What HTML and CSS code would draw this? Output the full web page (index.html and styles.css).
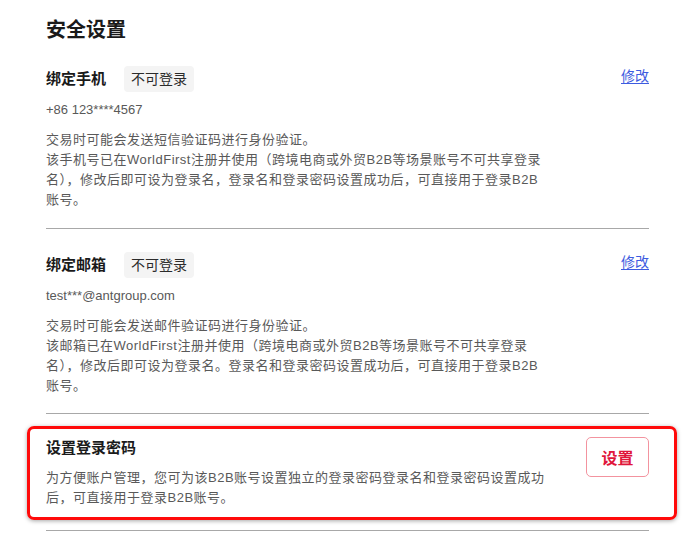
FILE: index.html
```html
<!DOCTYPE html>
<html lang="zh-CN">
<head>
<meta charset="utf-8">
<title>安全设置</title>
<link rel="stylesheet" href="styles.css">
</head>
<body>
<main class="page">
  <h1 class="page-title">安全设置</h1>

  <section class="item">
    <div class="item-head">
      <div class="item-name">
        <h2 class="item-title">绑定手机</h2>
        <span class="tag">不可登录</span>
      </div>
      <a class="link" href="#">修改</a>
    </div>
    <p class="item-value">+86 123****4567</p>
    <p class="item-desc">交易时可能会发送短信验证码进行身份验证。<br>该手机号已在WorldFirst注册并使用（跨境电商或外贸B2B等场景账号不可共享登录<br>名），修改后即可设为登录名，登录名和登录密码设置成功后，可直接用于登录B2B<br>账号。</p>
  </section>

  <section class="item">
    <div class="item-head">
      <div class="item-name">
        <h2 class="item-title">绑定邮箱</h2>
        <span class="tag">不可登录</span>
      </div>
      <a class="link" href="#">修改</a>
    </div>
    <p class="item-value">test***@antgroup.com</p>
    <p class="item-desc">交易时可能会发送邮件验证码进行身份验证。<br>该邮箱已在WorldFirst注册并使用（跨境电商或外贸B2B等场景账号不可共享登录<br>名），修改后即可设为登录名。登录名和登录密码设置成功后，可直接用于登录B2B<br>账号。</p>
  </section>

  <section class="item item-highlight">
    <div class="item-row">
      <div class="item-main">
        <h2 class="item-title">设置登录密码</h2>
        <p class="item-desc item-desc-tight">为方便账户管理，您可为该B2B账号设置独立的登录密码登录名和登录密码设置成功<br>后，可直接用于登录B2B账号。</p>
      </div>
      <button class="btn-outline" type="button">设置</button>
    </div>
  </section>
</main>
</body>
</html>
```

FILE: styles.css
```css
* {
  box-sizing: border-box;
}

html, body {
  margin: 0;
  padding: 0;
  background: #ffffff;
}

body {
  font-family: "Liberation Sans", "Noto Sans CJK SC", sans-serif;
  color: #1f1f1f;
}

.page {
  width: 698px;
  padding: 16px 49px 0 46px;
}

.page-title {
  margin: 0;
  font-size: 20px;
  line-height: 28px;
  font-weight: 700;
  color: #1a1a1a;
}

.item {
  border-bottom: 1px solid #a8a8a8;
  padding: 23px 0 17px;
}

.item:first-of-type {
  padding: 22px 0 18px;
}

.item-head {
  display: flex;
  justify-content: space-between;
  align-items: flex-start;
}

.item-name {
  display: flex;
  align-items: center;
  gap: 18px;
  height: 26px;
}

.item-title {
  margin: 0;
  font-size: 15px;
  line-height: 22px;
  font-weight: 700;
  color: #1a1a1a;
}

.tag {
  display: inline-block;
  background: #f4f4f4;
  color: #2b2b2b;
  font-size: 14px;
  line-height: 20px;
  padding: 3px 7px;
  border-radius: 4px;
}

.link {
  font-size: 14px;
  line-height: 20px;
  color: #3d5ce0;
  text-decoration: underline;
  text-underline-offset: 2px;
}

.item-value {
  margin: 8px 0 0;
  font-size: 13px;
  line-height: 20px;
  color: #595959;
}

.item-desc {
  margin: 10px 0 0;
  font-size: 13px;
  line-height: 20px;
  color: #595959;
  letter-spacing: 0.5px;
  white-space: nowrap;
}

.item-highlight {
  position: relative;
}

.item.item-highlight {
  padding: 23px 0 22px;
}

.item-highlight::before {
  content: "";
  position: absolute;
  top: 12px;
  bottom: 10px;
  left: -19px;
  right: -28px;
  border: 3px solid #ff0a0a;
  border-radius: 7px;
  box-shadow: 0 1px 4px rgba(0, 0, 0, 0.35);
  pointer-events: none;
}

.item-row {
  display: flex;
  justify-content: space-between;
  align-items: flex-start;
}

.item-desc-tight {
  margin-top: 9px;
}

.btn-outline {
  width: 63px;
  height: 40px;
  border: 1px solid #f3939f;
  border-radius: 5px;
  background: #ffffff;
  color: #e0163a;
  font-family: "Liberation Sans", "Noto Sans CJK SC", sans-serif;
  font-size: 16px;
  font-weight: 700;
  padding: 0;
  cursor: pointer;
}
```
